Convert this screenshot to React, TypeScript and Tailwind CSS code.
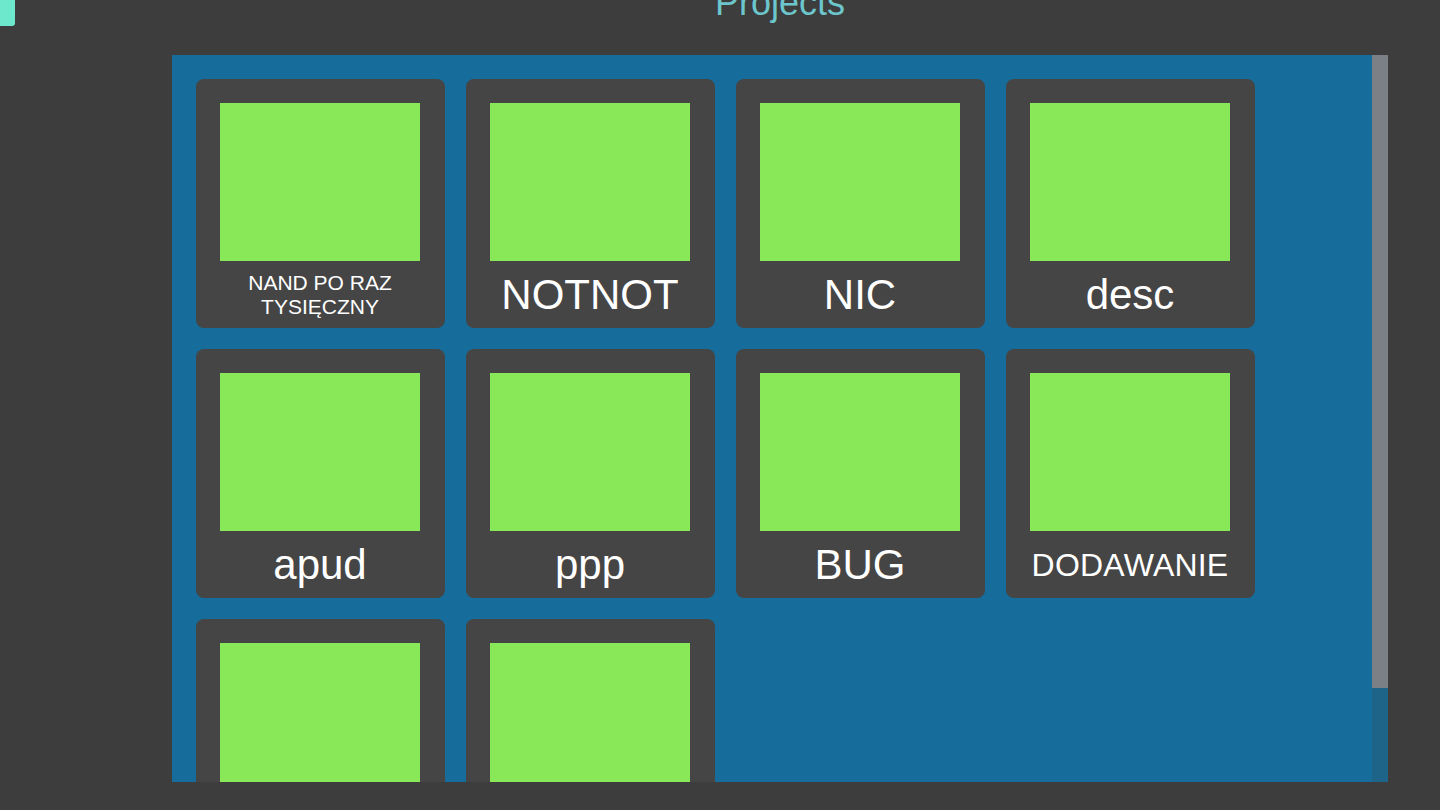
const projects = [
    { name: "NAND PO RAZ TYSIĘCZNY", size: "small" },
    { name: "NOTNOT", size: "large" },
    { name: "NIC", size: "large" },
    { name: "desc", size: "large" },
    { name: "apud", size: "large" },
    { name: "ppp", size: "large" },
    { name: "BUG", size: "large" },
    { name: "DODAWANIE", size: "medium" },
    { name: "", size: "large" },
    { name: "", size: "large" },
];

const ProjectCard = ({ name, size }: { name: string; size: string }) => {
    const textClass =
        size === "small"
            ? "text-[21px] leading-[24px] w-[160px]"
            : size === "medium"
            ? "text-[32px] leading-[36px] tracking-[0.2px]"
            : "text-[42px] leading-[46px]";
    return (
        <div className="w-[249px] h-[249px] shrink-0 rounded-lg bg-[#454545] pt-6 pl-6 flex flex-col">
            <div className="w-[200px] h-[158px] bg-[#88e858]" />
            <div className="flex-1 w-[200px] flex items-center justify-center">
                <span className={`text-white text-center ${textClass}`}>{name}</span>
            </div>
        </div>
    );
};

export default function App() {
    return (
        <div
            className="relative w-[1440px] h-[810px] overflow-hidden bg-[#3d3d3d]"
            style={{ fontFamily: "'Liberation Sans', Arial, sans-serif" }}
        >
            {/* cut-off button at the corner */}
            <div className="absolute left-0 top-0 w-[15px] h-[26px] bg-[#6ee8cc] rounded-br-[3px]" />

            <div className="ml-[172px] w-[1216px] flex flex-col">
                {/* Title */}
                <div className="h-[55px] flex justify-center">
                    <h1 className="-mt-[15px] text-[36px] leading-[36px] text-[#6cc6cc]">Projects</h1>
                </div>

                {/* Scroll panel */}
                <div className="h-[727px] flex bg-[#166d9b] overflow-hidden">
                    <div className="flex-1 overflow-hidden pt-6 pl-6">
                        <div className="grid grid-cols-[repeat(4,249px)] gap-x-[21px] gap-y-[21px]">
                            {projects.map((p, i) => (
                                <ProjectCard key={i} name={p.name} size={p.size} />
                            ))}
                        </div>
                    </div>
                    {/* Scrollbar */}
                    <div className="w-4 flex flex-col bg-[#1d6488]">
                        <div className="h-[633px] bg-[#7b8086]" />
                    </div>
                </div>
            </div>
        </div>
    );
}
